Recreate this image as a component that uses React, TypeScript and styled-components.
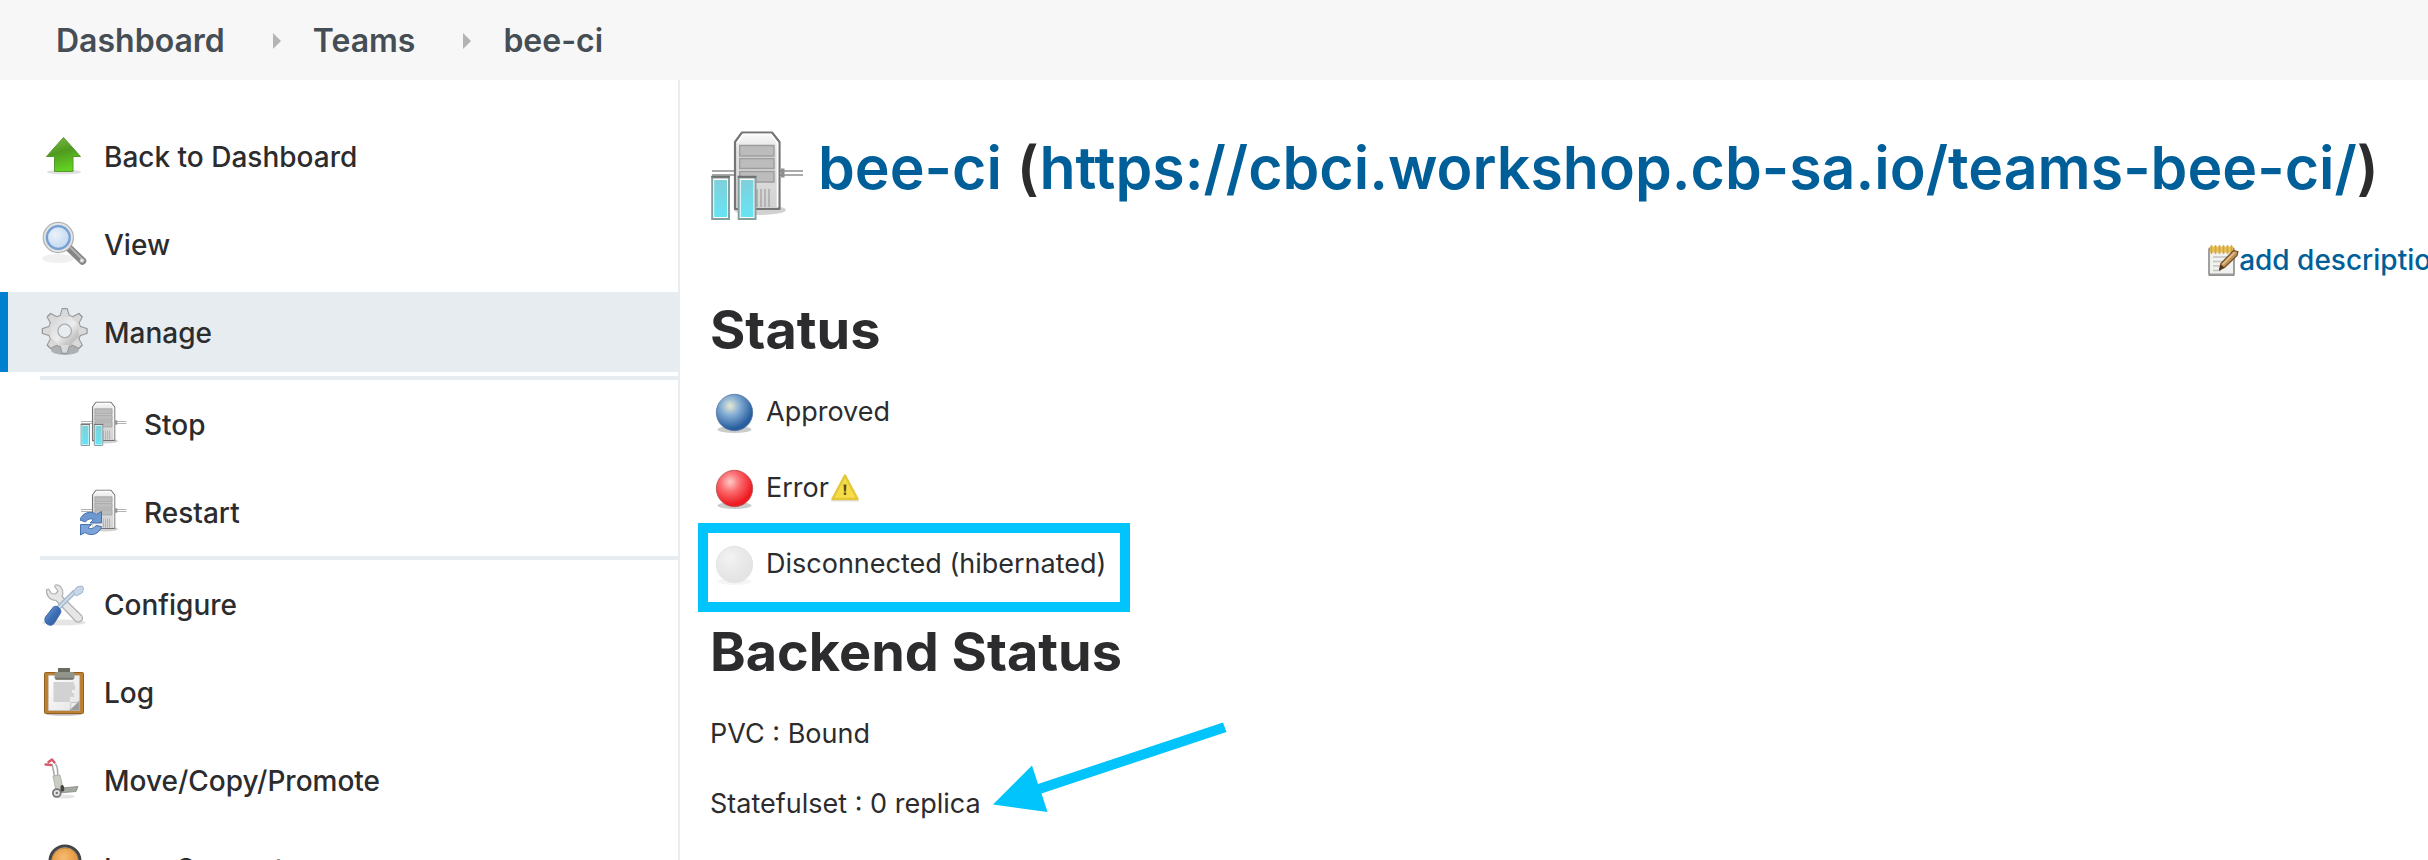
import React from "react";
import styled, { createGlobalStyle } from "styled-components";

const ink = "#2c2c2e";
const linkBlue = "#005f98";
const hairline = "#e7ecf0";
const marker = "#00c4fb";

const GlobalStyle = createGlobalStyle`
  *, *::before, *::after { box-sizing: border-box; }
  body { margin: 0; background: #fff; }
  svg { display: block; flex: none; }
`;

const Page = styled.div`
  height: 100vh;
  overflow: hidden;
  display: flex;
  flex-direction: column;
  color: ${ink};
  font-family: Inter, "Liberation Sans", sans-serif;
  font-size: 27px;
  line-height: 40px;
`;

const Breadcrumbs = styled.nav`
  flex: none;
  height: 80px;
  padding: 2px 0 0 56px;
  background: #f7f7f7;
`;

const CrumbList = styled.ol`
  height: 100%;
  margin: 0;
  padding: 0;
  list-style: none;
  display: flex;
  align-items: center;
`;

const Crumb = styled.li`
  display: flex;
  align-items: center;
  font-size: 32px;
  font-weight: 600;

  & + &::before {
    content: "";
    margin: 0 32px 0 48px;
    border: 8px solid transparent;
    border-left-color: #b4b4b4;
    border-right-width: 0;
  }
`;

const CrumbLink = styled.a`
  color: #454d55;
  text-decoration: none;
`;

const Body = styled.div`
  flex: none;
  display: flex;
`;

const Sidebar = styled.nav`
  flex: none;
  width: 680px;
  padding-top: 36px;
  border-right: 2px solid ${hairline};
  display: flex;
  flex-direction: column;
  gap: 8px;
`;

const TaskLink = styled.a<{ $active?: boolean; $nested?: boolean }>`
  height: 80px;
  padding-left: ${(p) => (p.$nested ? 72 : 32)}px;
  border-left: 8px solid ${(p) => (p.$active ? "#0080cf" : "transparent")};
  background: ${(p) => (p.$active ? hairline : "transparent")};
  display: flex;
  align-items: center;
  gap: 16px;
  color: ${ink};
  font-size: 28px;
  font-weight: 500;
  text-decoration: none;
`;

const TaskLabel = styled.span`
  padding-top: 2px;
`;

const SubTasks = styled.div`
  margin: -4px 0;
  padding: 8px 0;
  background:
    linear-gradient(${hairline}, ${hairline}) 40px 0 / 100% 4px no-repeat,
    linear-gradient(${hairline}, ${hairline}) 40px 100% / 100% 4px no-repeat;
  display: flex;
  flex-direction: column;
  gap: 8px;
`;

const Main = styled.main`
  flex: 1;
  min-width: 0;
  padding: 48px 0 40px 30px;
`;

const Title = styled.h1`
  margin: 0;
  display: flex;
  align-items: flex-start;
  gap: 12px;
  font-size: 59px;
  font-weight: 600;
  line-height: 80px;
  white-space: nowrap;
`;

const TitleLink = styled.a`
  color: ${linkBlue};
  text-decoration: none;
`;

const DescriptionBar = styled.div`
  margin: 16px -20px 0 0;
  display: flex;
  justify-content: flex-end;
`;

const DescriptionLink = styled.a`
  display: flex;
  align-items: center;
  color: ${linkBlue};
  font-size: 28px;
  font-weight: 500;
  text-decoration: none;
  white-space: nowrap;
`;

const SectionTitle = styled.h2`
  margin: 20px 0 14px;
  font-size: 54px;
  font-weight: 700;
  line-height: 60px;
`;

const StatusList = styled.ul`
  margin: 0;
  padding: 0;
  list-style: none;
`;

const StatusRow = styled.li`
  position: relative;
  width: fit-content;
  height: 76px;
  display: flex;
  align-items: center;
`;

const StatusLabel = styled.span`
  margin-left: 8px;
`;

const Highlight = styled.span`
  position: absolute;
  top: -3px;
  right: -24px;
  bottom: -10px;
  left: -12px;
  border: 10px solid ${marker};
`;

const Facts = styled.div`
  padding-top: 18px;
  display: grid;
  gap: 30px;
  justify-items: start;
`;

const Fact = styled.p`
  position: relative;
  margin: 0;
`;

const Pointer = styled.svg`
  position: absolute;
  left: 100%;
  bottom: 10px;
  margin-left: 12px;
`;

function BackIcon() {
  return (
    <svg width="48" height="48" viewBox="0 0 48 48" aria-hidden="true">
      <defs>
        <linearGradient id="back-g" x1="0" y1="0" x2="0.3" y2="1">
          <stop offset="0" stopColor="#7fbf4a" />
          <stop offset="0.5" stopColor="#4f9a1f" />
          <stop offset="1" stopColor="#62cf22" />
        </linearGradient>
      </defs>
      <ellipse cx="24" cy="40" rx="17" ry="2.5" fill="#000" opacity="0.12" />
      <path d="M23.5 5.5 40.5 24.5H33V39.5H14.5V24.5H6.5Z" fill="url(#back-g)" stroke="#559a2c" strokeWidth="1" strokeLinejoin="round" />
    </svg>
  );
}

function SearchIcon() {
  return (
    <svg width="48" height="48" viewBox="0 0 48 48" aria-hidden="true">
      <defs>
        <radialGradient id="lens-g" cx="0.4" cy="0.4" r="0.7">
          <stop offset="0" stopColor="#eaf2fb" />
          <stop offset="1" stopColor="#b4cfec" />
        </radialGradient>
      </defs>
      <ellipse cx="18" cy="38.5" rx="16" ry="4.5" fill="#000" opacity="0.06" />
      <path d="M28 27 42.5 41" stroke="#858585" strokeWidth="7.5" strokeLinecap="round" />
      <path d="M31 28 43 40" stroke="#b2b2b2" strokeWidth="2" strokeLinecap="round" />
      <circle cx="42" cy="40.5" r="2.2" fill="#e6e6e6" stroke="#999" strokeWidth="0.6" />
      <circle cx="18.3" cy="17.5" r="14.2" fill="url(#lens-g)" stroke="#b3b3b3" strokeWidth="3" />
      <circle cx="18.3" cy="17.5" r="13.6" fill="none" stroke="#e6e6e6" strokeWidth="1.6" />
      <circle cx="18.3" cy="17.5" r="11.4" fill="none" stroke="#74a0d3" strokeWidth="2.2" />
    </svg>
  );
}

const teeth = [0, 45, 90, 135, 180, 225, 270, 315];

function GearIcon() {
  return (
    <svg width="48" height="48" viewBox="0 0 48 48" aria-hidden="true">
      <defs>
        <linearGradient id="gear-g" gradientUnits="userSpaceOnUse" x1="8" y1="6" x2="42" y2="42">
          <stop offset="0" stopColor="#cfcfcf" />
          <stop offset="0.5" stopColor="#ededed" />
          <stop offset="0.7" stopColor="#c6c6c6" />
          <stop offset="1" stopColor="#b0b0b0" />
        </linearGradient>
      </defs>
      <ellipse cx="25" cy="42" rx="14" ry="5" fill="#000" opacity="0.25" />
      <g stroke="#999" strokeWidth="1.6" fill="#999" strokeLinejoin="round">
        {teeth.map((a) => (
          <path key={a} d="M20.3 8 22.4 0.8H27L29.1 8Z" transform={`rotate(${a} 24.7 23)`} />
        ))}
        <circle cx="24.7" cy="23" r="16" />
      </g>
      <circle cx="24.7" cy="23" r="15.8" fill="url(#gear-g)" />
      <g fill="#d9d9d9">
        {teeth.map((a) => (
          <path key={a} d="M20.3 9 22.6 1.3H26.8L29.1 9Z" transform={`rotate(${a} 24.7 23)`} />
        ))}
      </g>
      <circle cx="24.7" cy="23" r="6.8" fill={hairline} stroke="#aaaeb0" strokeWidth="1.3" />
    </svg>
  );
}

function ServerBody({ id }: { id: string }) {
  return (
    <>
      <defs>
        <linearGradient id={`${id}-b`} x1="0" y1="0" x2="0" y2="1">
          <stop offset="0" stopColor="#fafafa" />
          <stop offset="0.25" stopColor="#e2e2e2" />
          <stop offset="1" stopColor="#d2d2d2" />
        </linearGradient>
        <linearGradient id={`${id}-p`} x1="0" y1="0" x2="0" y2="1">
          <stop offset="0" stopColor="#7fd0da" />
          <stop offset="1" stopColor="#66e4f5" />
        </linearGradient>
      </defs>
      <ellipse cx="50" cy="82" rx="26" ry="5" fill="#000" opacity="0.18" />
      <path d="M2 43H93M2 47H93" stroke="#aaa" strokeWidth="1.8" />
      <path d="M71 40.5h3.5v9H71z" fill="#8f8f8f" />
      <path d="M25 14 32 4.5H62L69.5 14V81H25Z" fill={`url(#${id}-b)`} stroke="#757575" strokeWidth="2.2" strokeLinejoin="round" />
      <path d="M27 15 33 6.5H61L67.5 15V79" fill="none" stroke="#fff" strokeWidth="1.6" />
      <g fill="#bcbcbc" stroke="#9d9d9d" strokeWidth="1.4">
        <path d="M29.7 17.5H64V28H29.7z" />
        <path d="M29.7 30.5H64V40.5H29.7z" />
        <path d="M29.7 43.5H64V54H29.7z" />
      </g>
      <path d="M47 61V79M51 61V79M55 61V79M59 61V79" stroke="#a2a2a2" strokeWidth="1.3" />
    </>
  );
}

function ServerPausedIcon({ size, id }: { size: number; id: string }) {
  return (
    <svg width={size} height={size} viewBox="0 0 96 96" aria-hidden="true">
      <ServerBody id={id} />
      <g fill="#fff" stroke="#84a09e" strokeWidth="2">
        <path d="M2.2 49.5H19V91H2.2z" />
        <path d="M28.7 49.5H45.5V91H28.7z" />
      </g>
      <g fill={`url(#${id}-p)`}>
        <path d="M4.2 52H17V89H4.2z" />
        <path d="M30.7 52H43.5V89H30.7z" />
      </g>
      <path d="M1.2 48.8H20M27.7 48.8H46.5" stroke="#6f6f6f" strokeWidth="2" />
    </svg>
  );
}

function ServerRestartIcon() {
  return (
    <svg width="48" height="48" viewBox="0 0 96 96" aria-hidden="true">
      <ServerBody id="restart" />
      <circle cx="22" cy="71" r="22" fill="#fff" opacity="0.7" />
      <path d="M0 64A21 21 0 0 1 33 53L43 47V70H20L27 63A12 12 0 0 0 11 68Z" fill="#6e98d0" stroke="#4672b2" strokeWidth="2" />
      <path d="M43 77A21 21 0 0 1 10 89L1 94V73H23L16 80A12 12 0 0 0 32 75Z" fill="#7ba3d8" stroke="#4672b2" strokeWidth="2" />
    </svg>
  );
}

function ToolsIcon() {
  return (
    <svg width="48" height="48" viewBox="0 0 48 48" aria-hidden="true">
      <defs>
        <linearGradient id="tool-g" x1="0" y1="0" x2="1" y2="1">
          <stop offset="0" stopColor="#7da7dc" />
          <stop offset="0.5" stopColor="#3c6fb5" />
          <stop offset="1" stopColor="#2c5798" />
        </linearGradient>
      </defs>
      <ellipse cx="24" cy="42.5" rx="22" ry="3" fill="#000" opacity="0.1" />
      <path
        d="M6.5 9.5C6 15.5 9.500 20 16 20.500L35.500 41C39 44 44.500 40 41.500 35.500L22 16.500C24.500 11 21 4.500 15.500 5L14.500 6.500 18 11 15.500 14 11.500 13.500 8.500 9Z"
        fill="#e6e6e6"
        stroke="#b0b0b0"
        strokeWidth="1.2"
        strokeLinejoin="round"
      />
      <path d="M17 29 35 11.5" stroke="#9fb4cb" strokeWidth="4.6" />
      <path d="M17 29 35 11.5" stroke="#cbd9e8" strokeWidth="2.4" />
      <path d="M33 12 37 7 42 6 43.5 8 42.5 12.5 36.5 16Z" fill="#c7d7e8" stroke="#9fb4cb" strokeWidth="1" strokeLinejoin="round" />
      <path d="M5.5 37 13 27.5C15.5 24 22.5 29 20.5 33L14 43.5C10.5 48 2.5 43 5.5 37Z" fill="url(#tool-g)" stroke="#3a67a8" strokeWidth="1" />
    </svg>
  );
}

function ClipboardIcon() {
  return (
    <svg width="48" height="48" viewBox="0 0 48 48" aria-hidden="true">
      <defs>
        <linearGradient id="paper-g" x1="0" y1="0" x2="1" y2="1">
          <stop offset="0" stopColor="#fff" />
          <stop offset="1" stopColor="#e4e4e4" />
        </linearGradient>
      </defs>
      <ellipse cx="24" cy="46" rx="18" ry="1.8" fill="#000" opacity="0.25" />
      <rect x="4.5" y="4.5" width="39" height="41" rx="1" fill="#bd8136" stroke="#95601f" />
      <path d="M8.5 7.5H39.5V42.5H8.5Z" fill="url(#paper-g)" stroke="#c9c9c9" strokeWidth="0.6" />
      <path d="M13.5 14H34V17H35V22H32V25H34V29H30V34H13.5Z" fill="#d2d2d2" />
      <path d="M39.5 33V42.5H29.5C32 40 30.5 36 31 34 34 35 37.5 34.5 39.5 33Z" fill="#9b9b9b" />
      <path d="M39.5 33 29.5 42.5C31.5 40 30.5 36 31 34 34 35 37.5 34.5 39.5 33Z" fill="#ededed" stroke="#aaa" strokeWidth="0.5" />
      <path d="M18 0H30V4H32.5C34 4 34.5 5 34.5 6V9.5C34.5 11 33 12 31.5 12H17C15.5 12 14.5 11 14.5 9.5V6C14.5 5 15 4 16.5 4H18Z" fill="#92958a" />
      <path d="M18 0H30V4H18Z" fill="#686c62" />
      <path d="M15.5 10.5H33.5" stroke="#74776c" strokeWidth="1.5" />
    </svg>
  );
}

function HandTruckIcon() {
  return (
    <svg width="48" height="48" viewBox="0 0 48 48" aria-hidden="true">
      <ellipse cx="24" cy="40.5" rx="11" ry="2" fill="#000" opacity="0.1" />
      <path d="M12 8 15 22M15.5 8C18 11 18 16 17.5 22" fill="none" stroke="#a5a7a6" strokeWidth="1.5" />
      <path d="M13 20 20 19 23 32 16 35Z" fill="#c9cdc5" stroke="#a4a8a0" strokeWidth="0.8" />
      <path d="M19 37 36 35.5 38 30.5 22 32Z" fill="#a5aaa1" stroke="#858a82" strokeWidth="0.8" />
      <path d="M20.5 30C23 27 25 31 24 35L20.5 36Z" fill="#404340" />
      <circle cx="16.8" cy="37" r="3.9" fill="#e5e5e5" stroke="#777" strokeWidth="1.8" />
      <circle cx="16.8" cy="37" r="1.2" fill="#777" />
      <path d="M5.500 8.500 11 9M8.500 6 12 3.500 14.500 6.500" fill="none" stroke="#d65b6c" strokeWidth="2.4" strokeLinecap="round" strokeLinejoin="round" />
    </svg>
  );
}

function HeadsetIcon() {
  return (
    <svg width="48" height="48" viewBox="0 0 48 48" aria-hidden="true">
      <defs>
        <radialGradient id="face-g" cx="0.45" cy="0.35" r="0.65">
          <stop offset="0" stopColor="#f6bd72" />
          <stop offset="1" stopColor="#e08a2c" />
        </radialGradient>
      </defs>
      <path d="M6 48C6 36 14 32 25 32S44 36 44 48Z" fill="#5c86bb" />
      <circle cx="25" cy="17.5" r="13.5" fill="url(#face-g)" stroke="#b9762c" strokeWidth="0.8" />
      <path d="M10 22V17A15 15 0 0 1 40 17V22" fill="none" stroke="#454545" strokeWidth="3" />
      <rect x="7" y="16" width="5" height="12" rx="2.5" fill="#555" />
      <rect x="38" y="16" width="5" height="12" rx="2.5" fill="#555" />
    </svg>
  );
}

const balls = {
  blue: ["#e6ead2", "#7fa9d3", "#2a5f9f", "#4b6d95"],
  red: ["#ffc9c9", "#fb6a6c", "#ee1c22", "#a8474a"],
  grey: ["#f3f3f3", "#ebebeb", "#e4e4e4", "#e0e0e0"],
};

function Ball({ tone }: { tone: keyof typeof balls }) {
  const [glow, mid, deep, rim] = balls[tone];
  return (
    <svg width="48" height="48" viewBox="0 0 48 48" aria-hidden="true">
      <defs>
        <radialGradient id={`ball-${tone}`} cx="0.38" cy="0.32" r="0.62">
          <stop offset="0" stopColor={glow} />
          <stop offset="0.45" stopColor={mid} />
          <stop offset="1" stopColor={deep} />
        </radialGradient>
      </defs>
      <ellipse cx="24.5" cy="41.5" rx="17" ry="3.5" fill="#000" opacity={tone === "grey" ? 0.04 : 0.2} />
      <circle cx="24.5" cy="24.5" r="18.2" fill={`url(#ball-${tone})`} stroke={rim} strokeOpacity="0.7" />
    </svg>
  );
}

function WarningIcon() {
  return (
    <svg width="32" height="32" viewBox="0 0 32 32" aria-hidden="true">
      <path d="M3 28.5H29" stroke="#000" strokeOpacity="0.12" strokeWidth="2" strokeLinecap="round" />
      <path d="M16 3.5 28.5 27H3.5Z" fill="#f6dc45" stroke="#e3c63c" strokeWidth="2.4" strokeLinejoin="round" />
      <path d="M14.5 12.5H17.5L17 19.5H15Z" fill="#5a5120" />
      <rect x="14.8" y="20.5" width="2.4" height="2.4" fill="#5a5120" />
    </svg>
  );
}

function NotepadIcon() {
  return (
    <svg width="32" height="32" viewBox="0 0 32 32" aria-hidden="true">
      <rect x="2" y="4" width="25" height="27.5" rx="1.5" fill="#f1f1ef" stroke="#8a8a88" strokeWidth="1.6" />
      <path d="M3 30.5H26.5" stroke="#9b9b99" strokeWidth="2" />
      <path d="M6 13H22M6 17.5H20M6 22H18M6 26.5H14" stroke="#c3c3c3" strokeWidth="1.4" />
      <path d="M3 2.5H26V8.5H3Z" fill="#e9c560" />
      <path d="M4.5 2V9M8.5 2V9M12.5 2V9M16.5 2V9M20.5 2V9M24.5 2V9" stroke="#d5a73a" strokeWidth="1.8" strokeLinecap="round" />
      <path d="M12.5 26 14 19.5 26.5 6.5 31 7.5 30 11.5 17.5 23.5Z" fill="#bf9257" stroke="#765127" strokeWidth="1.2" strokeLinejoin="round" />
      <path d="M15.5 20.5 27.5 8.5" stroke="#e6c391" strokeWidth="1.5" />
      <path d="M12 26.5 13.5 20.5 17.5 23.5Z" fill="#50391d" />
    </svg>
  );
}

export default function App() {
  return (
    <Page>
      <GlobalStyle />
      <Breadcrumbs aria-label="Breadcrumb">
        <CrumbList>
          <Crumb><CrumbLink href="#dashboard">Dashboard</CrumbLink></Crumb>
          <Crumb><CrumbLink href="#teams">Teams</CrumbLink></Crumb>
          <Crumb><CrumbLink href="#bee-ci">bee-ci</CrumbLink></Crumb>
        </CrumbList>
      </Breadcrumbs>
      <Body>
        <Sidebar aria-label="Tasks">
          <TaskLink href="#dashboard"><BackIcon /><TaskLabel>Back to Dashboard</TaskLabel></TaskLink>
          <TaskLink href="#view"><SearchIcon /><TaskLabel>View</TaskLabel></TaskLink>
          <TaskLink href="#manage" $active aria-current="page"><GearIcon /><TaskLabel>Manage</TaskLabel></TaskLink>
          <SubTasks>
            <TaskLink href="#stop" $nested><ServerPausedIcon size={48} id="stop" /><TaskLabel>Stop</TaskLabel></TaskLink>
            <TaskLink href="#restart" $nested><ServerRestartIcon /><TaskLabel>Restart</TaskLabel></TaskLink>
          </SubTasks>
          <TaskLink href="#configure"><ToolsIcon /><TaskLabel>Configure</TaskLabel></TaskLink>
          <TaskLink href="#log"><ClipboardIcon /><TaskLabel>Log</TaskLabel></TaskLink>
          <TaskLink href="#move"><HandTruckIcon /><TaskLabel>Move/Copy/Promote</TaskLabel></TaskLink>
          <TaskLink href="#support"><HeadsetIcon /><TaskLabel>Logs Support</TaskLabel></TaskLink>
        </Sidebar>
        <Main>
          <Title>
            <ServerPausedIcon size={96} id="title" />
            <span>
              <TitleLink href="#bee-ci">bee-ci</TitleLink>
              {" ("}
              <TitleLink href="#controller">https://cbci.workshop.cb-sa.io/teams-bee-ci/</TitleLink>
              {")"}
            </span>
          </Title>
          <DescriptionBar>
            <DescriptionLink href="#description"><NotepadIcon />add description</DescriptionLink>
          </DescriptionBar>
          <SectionTitle>Status</SectionTitle>
          <StatusList>
            <StatusRow><Ball tone="blue" /><StatusLabel>Approved</StatusLabel></StatusRow>
            <StatusRow><Ball tone="red" /><StatusLabel>Error</StatusLabel><WarningIcon /></StatusRow>
            <StatusRow>
              <Ball tone="grey" />
              <StatusLabel>Disconnected (hibernated)</StatusLabel>
              <Highlight />
            </StatusRow>
          </StatusList>
          <SectionTitle>Backend Status</SectionTitle>
          <Facts>
            <Fact>PVC : Bound</Fact>
            <Fact>
              Statefulset : 0 replica
              <Pointer width="236" height="94" viewBox="0 0 236 94" aria-hidden="true">
                <path d="M0 84.5 39 45.5 45 64 230 2.5 233.5 12 48.5 73.5 54.5 92Z" fill={marker} />
              </Pointer>
            </Fact>
          </Facts>
        </Main>
      </Body>
    </Page>
  );
}
